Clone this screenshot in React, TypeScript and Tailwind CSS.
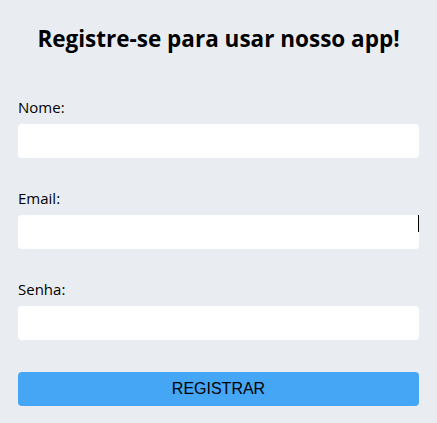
export default function App() {
  return (
    <div
      className="min-h-screen bg-[#e9edf2] px-[18px] pt-[22px] text-black"
      style={{ fontFamily: '"Open Sans", "Noto Sans", sans-serif' }}
    >
      <h1 className="text-center text-[22.5px] font-bold leading-[33px]">
        Registre-se para usar nosso app!
      </h1>

      <form className="mt-[40px] flex flex-col" onSubmit={(e) => e.preventDefault()}>
        <div className="mb-[28px] flex flex-col">
          <label className="mb-[5px] text-[15px] leading-[24px]">Nome:</label>
          <input type="text" className="h-[34px] w-full rounded bg-white outline-none" />
        </div>

        <div className="mb-[28px] flex flex-col">
          <label className="mb-[5px] text-[15px] leading-[24px]">Email:</label>
          <div className="relative">
            <input type="email" className="block h-[34px] w-full rounded bg-white outline-none" />
            <span className="absolute right-0 top-0 h-[17px] w-px bg-black" />
          </div>
        </div>

        <div className="mb-[32px] flex flex-col">
          <label className="mb-[5px] text-[15px] leading-[24px]">Senha:</label>
          <input type="password" className="h-[34px] w-full rounded bg-white outline-none" />
        </div>

        <button
          type="submit"
          className="h-[34px] w-full rounded bg-[#44a6f5] text-[16px] text-black"
          style={{ fontFamily: '"Liberation Sans", Arial, sans-serif' }}
        >
          REGISTRAR
        </button>
      </form>
    </div>
  );
}
